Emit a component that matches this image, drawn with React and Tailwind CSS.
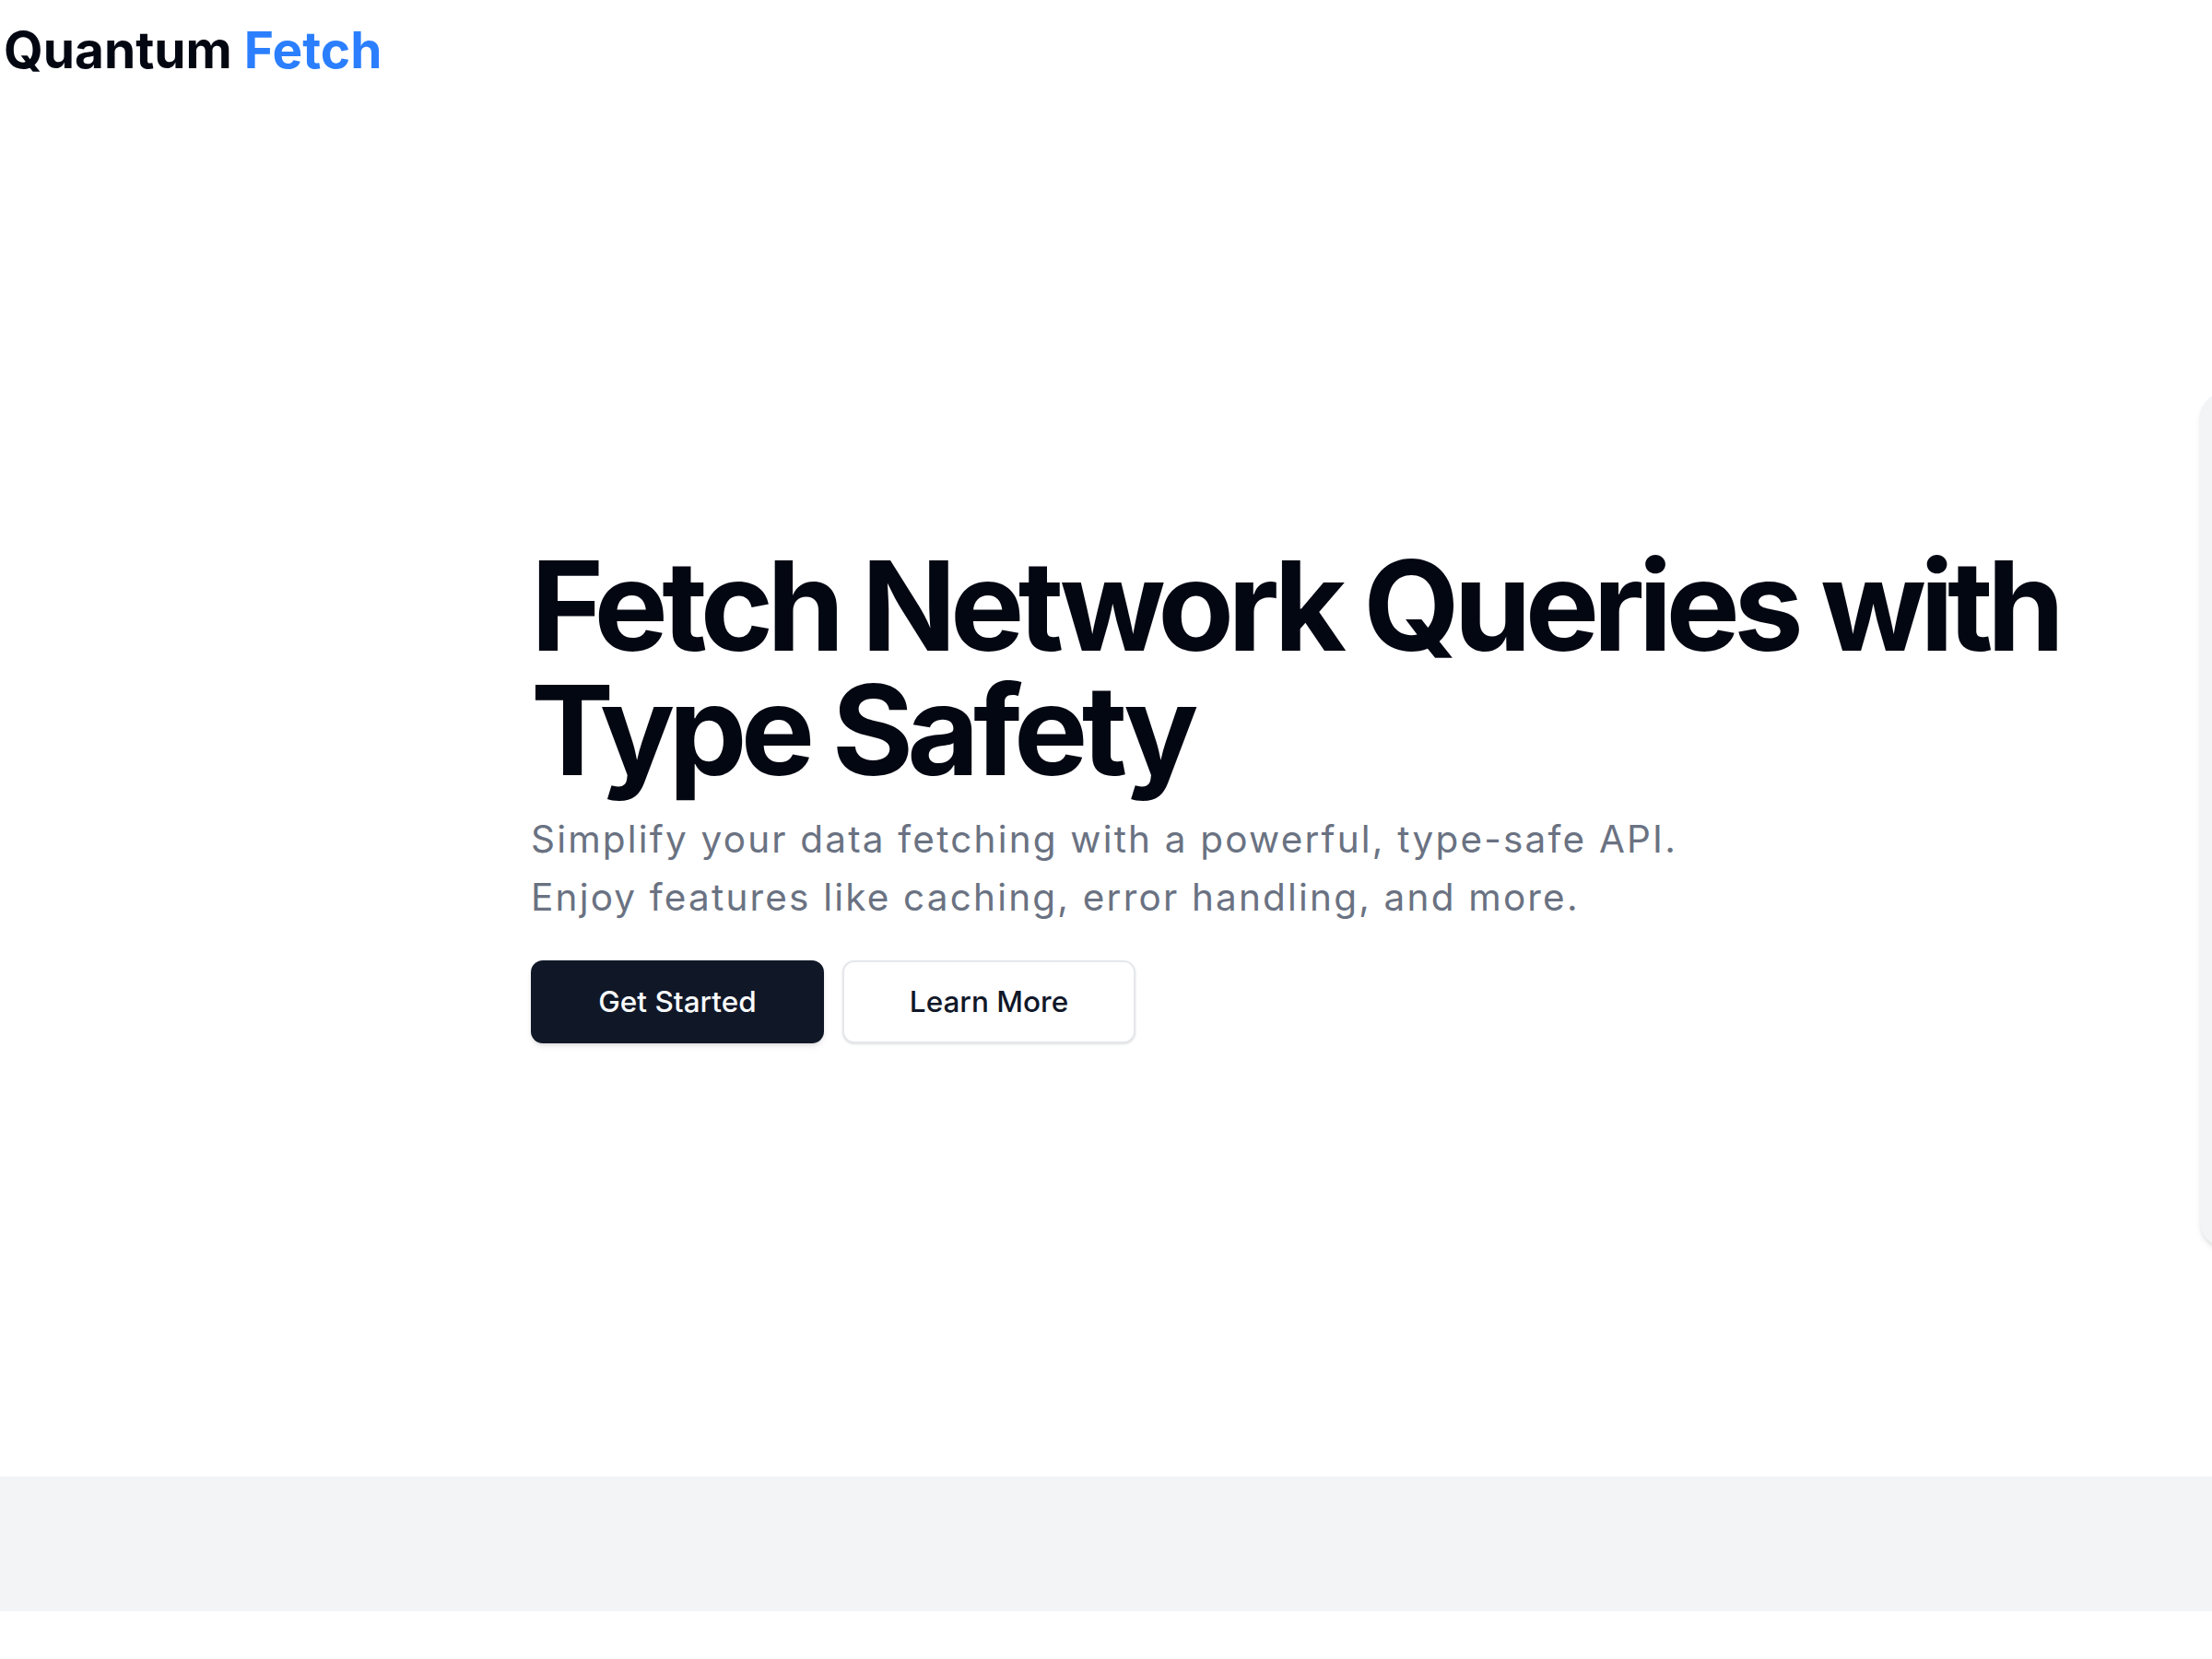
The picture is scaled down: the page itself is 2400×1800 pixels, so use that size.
export default function App() {
  return (
    <div className="min-h-screen bg-white text-gray-950 font-['Inter',sans-serif]">
      {/* Top bar */}
      <header className="flex h-[108px] items-center px-[4px]">
        <span className="text-[55px] font-bold leading-[72px]">
          Quantum <span className="text-blue-500">Fetch</span>
        </span>
      </header>

      {/* Hero */}
      <section className="flex h-[1494px] items-center gap-[48px] overflow-hidden pt-[12px] pl-[576px]">
        <div className="flex w-[1763px] shrink-0 flex-col">
          <h1 className="text-[135px] font-bold leading-[135px] tracking-[-0.05em] text-gray-950">
            Fetch Network Queries with Type Safety
          </h1>
          <p className="mt-[19px] max-w-[1320px] text-[40.5px] leading-[63px] tracking-[0.054em] text-gray-500">
            Simplify your data fetching with a powerful, type-safe API. Enjoy features like caching, error handling, and more.
          </p>
          <div className="mt-[37px] flex gap-[20px]">
            <button className="h-[90px] w-[318px] rounded-[13px] bg-gray-900 text-[31.5px] font-medium text-gray-50 shadow-md">
              Get Started
            </button>
            <button className="h-[90px] w-[318px] rounded-[13px] border-2 border-gray-200 bg-white text-[31.5px] font-medium text-gray-900 shadow-sm">
              Learn More
            </button>
          </div>
        </div>
        <div className="mt-[56px] h-[927px] w-[900px] shrink-0 rounded-[27px] bg-gray-100 shadow-md" />
      </section>

      {/* Features band */}
      <section className="h-[146px] bg-gray-100" />
    </div>
  );
}
